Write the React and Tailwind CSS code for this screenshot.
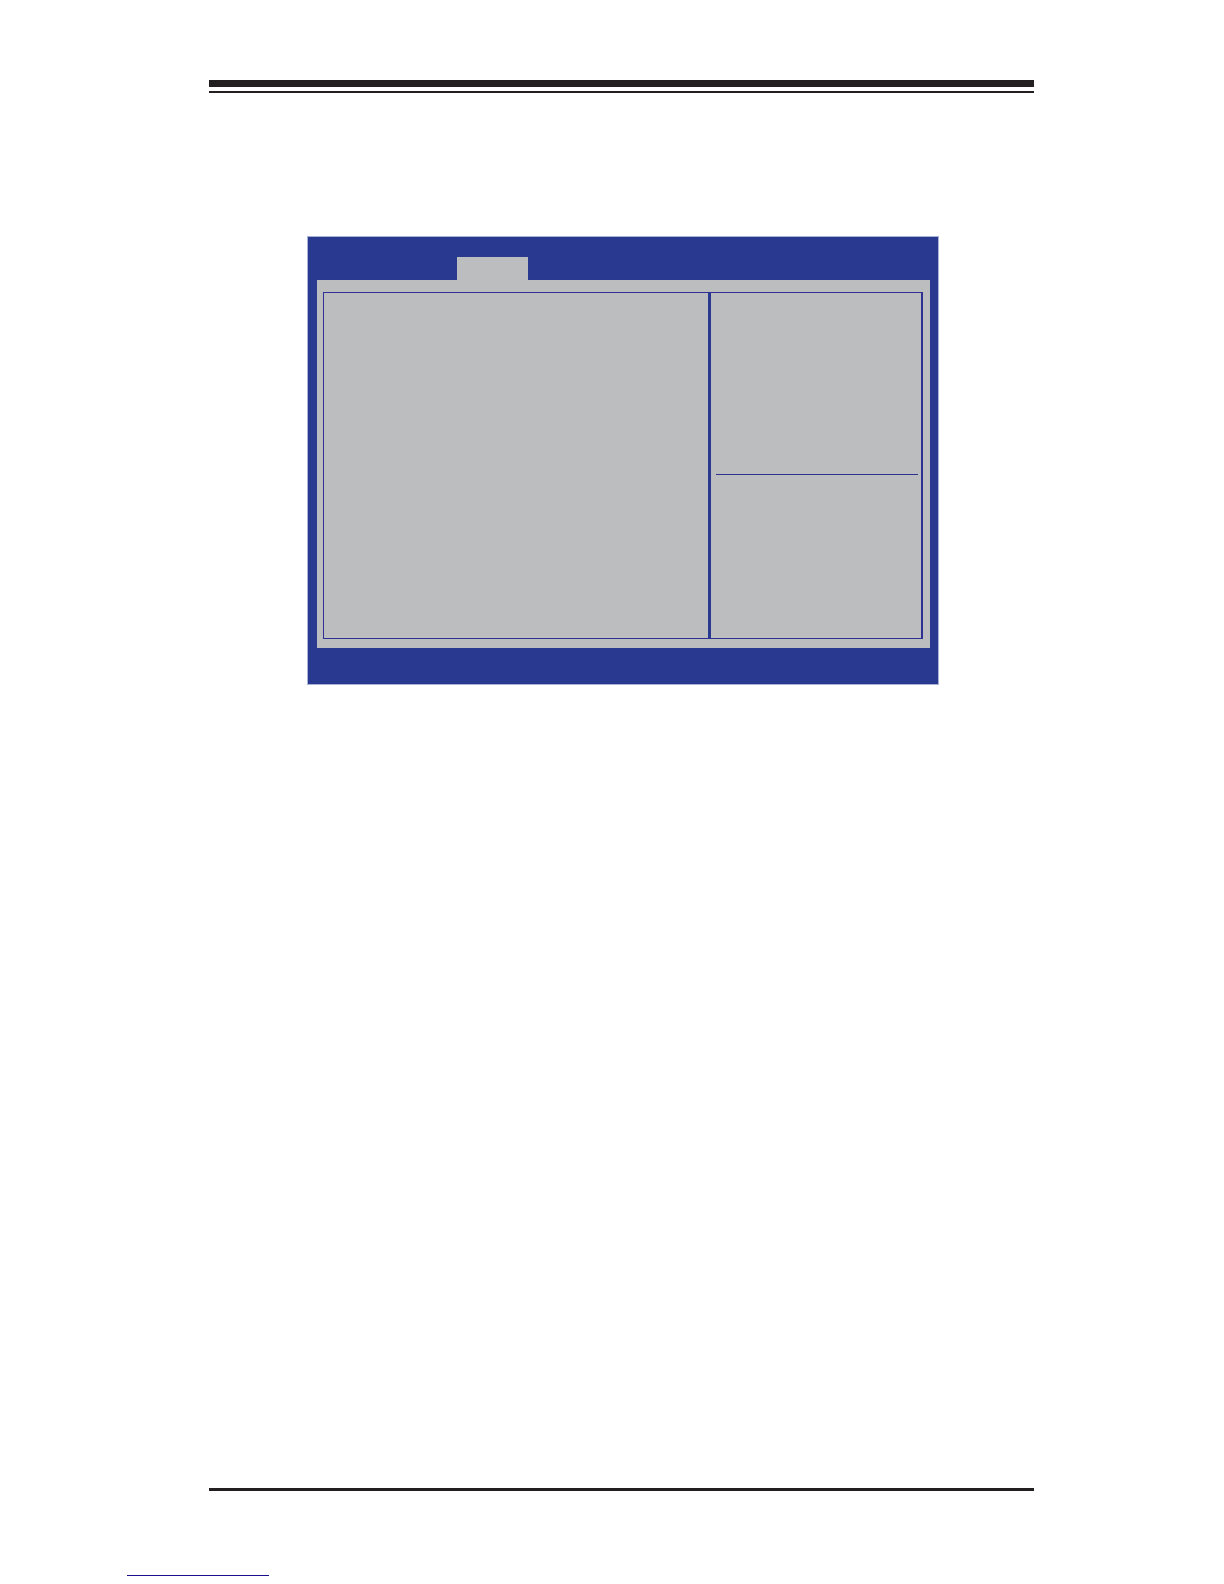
import React from "react";

const PageHeader = () => (
    <header>
        <div className="h-[7px] bg-[#231f20]" />
        <div className="mt-1 h-[2px] bg-[#231f20]" />
    </header>
);

const SetupScreen = () => (
    <section className="ml-[98px] mr-[95px] mt-[143px] border border-[#a9b3d6] bg-[#2a3990] px-2 pb-9 pt-5">
        <div className="flex pl-[141px]">
            <div className="h-[23px] w-[71px] bg-[#bbbdbe]" />
        </div>
        <div className="ml-px bg-[#bbbdbe] pb-[9px] pl-[6px] pr-[7px] pt-3">
            <div className="flex border border-r-2 border-[#2e3192]">
                <div className="flex-1" />
                <div className="w-[213px] border-l-[3px] border-[#2a3990] pl-[5px] pr-[3px]">
                    <div className="h-[181px]" />
                    <hr className="border-t border-[#2e3192]" />
                    <div className="h-[163px]" />
                </div>
            </div>
        </div>
    </section>
);

const App = () => {
    return (
        <div className="flex min-h-screen flex-col bg-white pb-2 pt-20">
            <main className="ml-[209px] mr-[190px] flex flex-1 flex-col">
                <PageHeader />
                <SetupScreen />
            </main>
            <footer>
                <div className="ml-[209px] mr-[190px] h-[3px] bg-[#231f20]" />
                <div className="ml-[127px] mt-[84px] h-px w-[142px] bg-[#1a1090]" />
            </footer>
        </div>
    );
};

export default App;
